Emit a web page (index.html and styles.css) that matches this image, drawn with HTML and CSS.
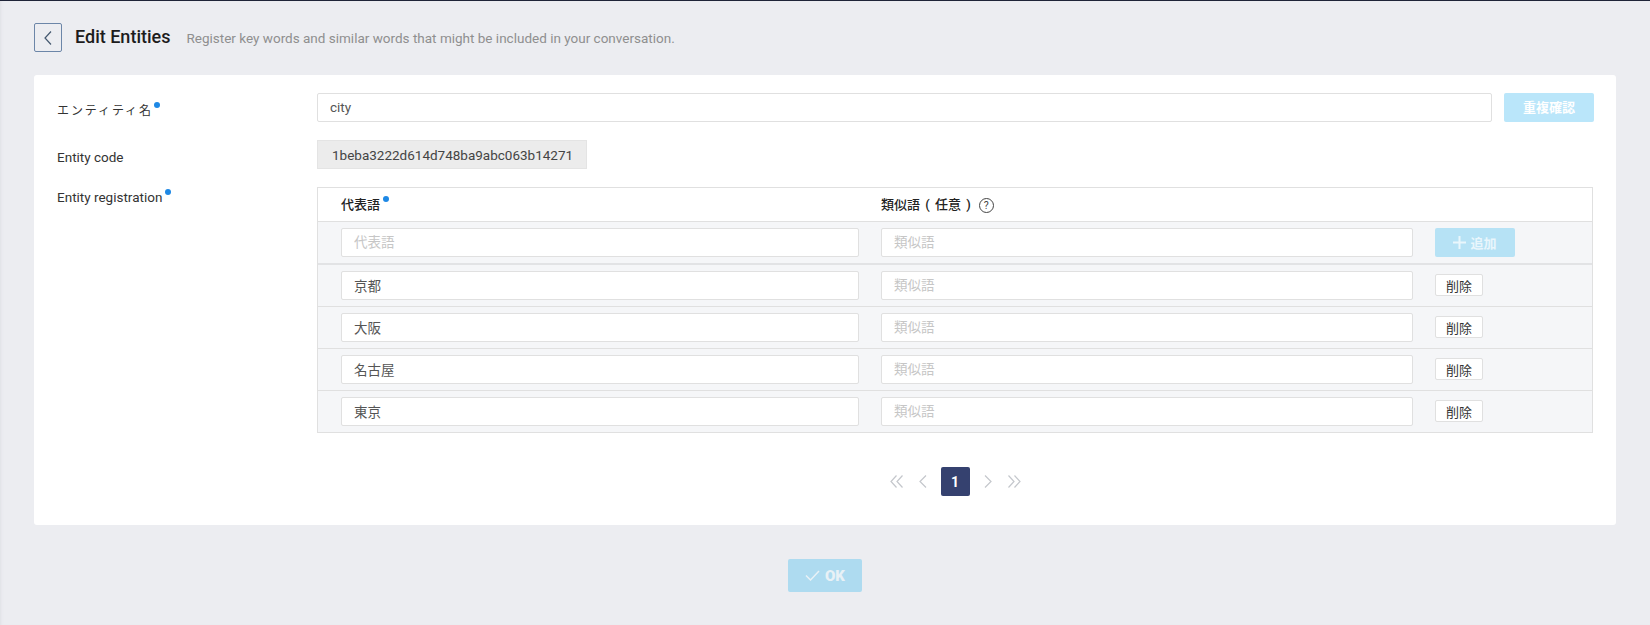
FILE: index.html
```html
<!DOCTYPE html>
<html lang="ja">
  <head>
    <meta charset="UTF-8" />
    <meta name="viewport" content="width=device-width, initial-scale=1.0" />
    <title>Edit Entities</title>
    <link rel="stylesheet" href="styles.css">
  </head>
  <body>
    <header class="page-head">
      <button class="back-btn" type="button" aria-label="back">
        <svg width="10" height="16" viewBox="0 0 10 16"><path d="M8 1.5 2 8l6 6.5" fill="none" stroke="#44586f" stroke-width="1.2"/></svg>
      </button>
      <h1>Edit Entities</h1>
      <p>Register key words and similar words that might be included in your conversation.</p>
    </header>

    <main class="card">
      <div class="form-row">
        <label class="form-label ja-label">エンティティ名<i class="dot"></i></label>
        <div class="name-field">
          <input class="text-input" type="text" value="city" />
          <button class="check-btn" type="button">重複確認</button>
        </div>
      </div>
      <div class="form-row">
        <label class="form-label code-label">Entity code</label>
        <div class="code-box">1beba3222d614d748ba9abc063b14271</div>
      </div>
      <div class="form-row">
        <label class="form-label reg-label">Entity registration<i class="dot"></i></label>
        <div class="entity-table">
          <div class="entity-row head-row">
            <div class="col-title">代表語<i class="dot"></i></div>
            <div class="col-title col-similar">類似語 ( 任意 )<span class="help">?</span></div>
          </div>
          <div class="entity-row add-row">
            <input class="text-input" type="text" placeholder="代表語" />
            <input class="text-input" type="text" placeholder="類似語" />
            <button class="add-btn" type="button">
              <svg width="13" height="13" viewBox="0 0 13 13"><path d="M6.5 0v13M0 6.5h13" stroke="#e9f6fc" stroke-width="2"/></svg>
              追加
            </button>
          </div>
          <div class="entity-row">
            <input class="text-input" type="text" value="京都" />
            <input class="text-input" type="text" placeholder="類似語" />
            <button class="del-btn" type="button">削除</button>
          </div>
          <div class="entity-row">
            <input class="text-input" type="text" value="大阪" />
            <input class="text-input" type="text" placeholder="類似語" />
            <button class="del-btn" type="button">削除</button>
          </div>
          <div class="entity-row">
            <input class="text-input" type="text" value="名古屋" />
            <input class="text-input" type="text" placeholder="類似語" />
            <button class="del-btn" type="button">削除</button>
          </div>
          <div class="entity-row">
            <input class="text-input" type="text" value="東京" />
            <input class="text-input" type="text" placeholder="類似語" />
            <button class="del-btn" type="button">削除</button>
          </div>
        </div>
      </div>
      <nav class="pager">
        <svg class="pg-first" width="13" height="13" viewBox="0 0 13 13"><path d="M6.5.5 1 6.5l5.5 6M12.5.5 7 6.5l5.5 6" fill="none" stroke="#c4c7cc" stroke-width="1.2"/></svg>
        <svg width="8" height="13" viewBox="0 0 8 13"><path d="M7 .5 1 6.5l6 6" fill="none" stroke="#c4c7cc" stroke-width="1.2"/></svg>
        <span class="pg-num">1</span>
        <svg width="8" height="13" viewBox="0 0 8 13"><path d="m1 .5 6 6-6 6" fill="none" stroke="#c4c7cc" stroke-width="1.2"/></svg>
        <svg class="pg-last" width="13" height="13" viewBox="0 0 13 13"><path d="M.5.5 6 6.500l-5.500 6M6.500.5l5.500 6-5.500 6" fill="none" stroke="#c4c7cc" stroke-width="1.2"/></svg>
      </nav>
    </main>

    <div class="page-foot">
      <button class="ok-btn" type="button">
        <svg width="15" height="11" viewBox="0 0 15 11"><path d="m1 5.500 4.500 4.500L14 1" fill="none" stroke="#e8f1f6" stroke-width="1.500"/></svg>
        OK
      </button>
    </div>
  </body>
</html>
```

FILE: styles.css
```css
* {
  box-sizing: border-box;
}
html,
body {
  height: 100%;
}
body {
  margin: 0;
  background-color: #ecedf1;
  border-top: 1px solid #1f2438;
  box-shadow: inset 3px 0 3px -2px #dfe0e5;
  font-family: Roboto, "Noto Sans CJK JP", sans-serif;
  font-size: 13.5px;
  color: #333;
  overflow: hidden;
}
button {
  font-family: inherit;
  cursor: pointer;
}
.page-head {
  display: flex;
  align-items: center;
  height: 74px;
  padding: 0 0 1px 34px;
}
.back-btn {
  display: flex;
  align-items: center;
  justify-content: center;
  width: 28px;
  height: 29px;
  padding: 0;
  background: transparent;
  border: 1px solid #6c86a8;
  border-radius: 2px;
}
.page-head h1 {
  margin: 0 16px 2px 13px;
  font-size: 18px;
  font-weight: 500;
  color: #1c1c1c;
}
.page-head p {
  margin: 0;
  font-size: 13.5px;
  color: #8f8f8f;
}
.card {
  margin: 0 34px;
  height: 450px;
  padding: 18px 22px 0 23px;
  background: white;
  border-radius: 3px;
}
.form-row {
  display: flex;
  margin-bottom: 18px;
}
.form-label {
  flex: 0 0 260px;
  color: #333;
}
.ja-label {
  padding-top: 8px;
  font-size: 12px;
  letter-spacing: 1.9px;
}
.ja-label .dot {
  margin-left: 1px;
}
.code-label {
  padding-top: 9px;
}
.reg-label {
  padding-top: 2px;
}
.dot {
  display: inline-block;
  width: 6px;
  height: 6px;
  margin-left: 3px;
  border-radius: 50%;
  background-color: #1e88e5;
  vertical-align: 7px;
}
.name-field {
  flex: 1;
  display: flex;
  gap: 12px;
}
.text-input {
  width: 100%;
  height: 29px;
  padding: 0 12px 2px;
  background: white;
  border: 1px solid #e0e0e0;
  border-radius: 2px;
  outline: none;
  font-family: inherit;
  font-size: 13.5px;
  color: #555;
}
.text-input::placeholder {
  color: #c6c6c6;
}
.check-btn {
  flex: 0 0 90px;
  height: 29px;
  padding: 0 0 2px;
  background-color: #bae6fa;
  border: none;
  border-radius: 2px;
  color: white;
  font-size: 13px;
  font-weight: 700;
}
.code-box {
  display: flex;
  align-items: center;
  width: 270px;
  height: 29px;
  padding: 0 14px;
  background-color: #ececec;
  border: 1px solid #e4e4e4;
  color: #444;
}
.entity-table {
  flex: 1;
  height: 246px;
  margin-right: 1px;
  border: 1px solid #e0e0e0;
  border-bottom: none;
}
.entity-row {
  display: grid;
  grid-template-columns: 518px 532px 1fr;
  column-gap: 22px;
  height: 42px;
  padding: 6px 0 0 23px;
  background-color: #f5f6f8;
  border-bottom: 1px solid #e0e0e0;
}
.head-row {
  height: 34px;
  padding-top: 7px;
  background-color: white;
}
.add-row {
  height: 43px;
  border-bottom: 2px solid #e2e3e5;
}
.col-title {
  display: flex;
  align-items: flex-start;
  font-size: 13px;
  font-weight: 500;
  line-height: 20px;
  color: #222;
}
.col-similar {
  word-spacing: 2px;
}
.col-title .dot {
  margin-top: 1px;
}
.help {
  display: inline-flex;
  align-items: center;
  justify-content: center;
  width: 15px;
  height: 15px;
  margin: 3px 0 0 8px;
  border: 1px solid #444;
  border-radius: 50%;
  font-size: 10.5px;
  font-weight: 400;
  color: #444;
}
.add-btn {
  display: flex;
  align-items: center;
  justify-content: center;
  gap: 4px;
  width: 80px;
  height: 29px;
  padding: 0;
  background-color: #b6e2f5;
  border: none;
  border-radius: 2px;
  color: #e9f6fc;
  font-size: 13px;
  font-weight: 700;
}
.del-btn {
  width: 48px;
  height: 22px;
  margin-top: 3px;
  padding: 0;
  background: white;
  border: 1px solid #e0e0e0;
  border-radius: 2px;
  color: #333;
  font-size: 13px;
}
.pager {
  display: flex;
  align-items: center;
  justify-content: center;
  gap: 14px;
  margin: 34px 1px 0 260px;
}
.pg-first {
  margin-right: 2px;
}
.pg-last {
  margin-left: 2px;
}
.pg-num {
  display: flex;
  align-items: center;
  justify-content: center;
  width: 29px;
  height: 29px;
  background-color: #35416f;
  border-radius: 2px;
  color: white;
  font-size: 14px;
  font-weight: 700;
}
.page-foot {
  display: flex;
  justify-content: center;
  padding-top: 34px;
}
.ok-btn {
  display: flex;
  align-items: center;
  justify-content: center;
  gap: 5px;
  width: 74px;
  height: 33px;
  padding: 0;
  background-color: #aedbf0;
  border: none;
  border-radius: 2px;
  color: #e8f1f6;
  font-size: 15px;
  font-weight: 900;
}
```
